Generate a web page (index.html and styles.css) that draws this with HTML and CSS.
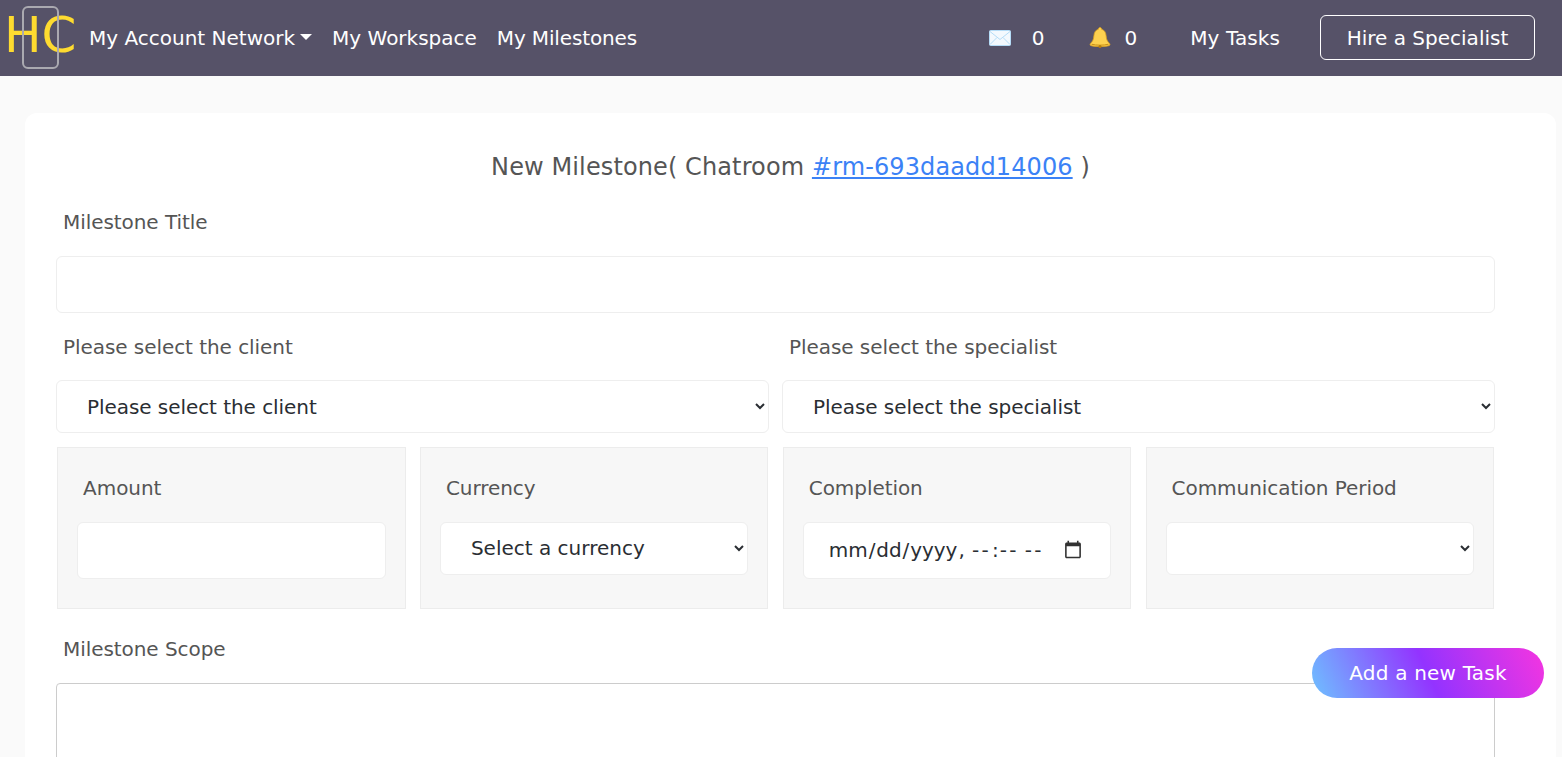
FILE: index.html
```html
<!DOCTYPE html>
<html lang="en">
<head>
<meta charset="utf-8">
<title>New Milestone</title>
<link rel="stylesheet" href="styles.css">
</head>
<body>
<nav class="nav">
  <a class="logo"><span class="logo-text">HC</span><span class="logo-box"></span></a>
  <a class="nav-link dropdown">My Account Network<span class="caret"></span></a>
  <a class="nav-link workspace">My Workspace</a>
  <a class="nav-link milestones">My Milestones</a>
  <div class="nav-right">
    <svg class="icon mail" viewBox="0 0 22 16" width="22" height="16" aria-hidden="true">
      <rect x="0.5" y="0.5" width="21" height="15" rx="1" fill="#f4f9fe" stroke="#b5dcf7"/>
      <path d="M1 1.5 L11 9.5 L21 1.5 M1 14.5 L8 7.5 M21 14.5 L14 7.5" fill="none" stroke="#b5dcf7" stroke-width="1"/>
    </svg>
    <span class="count count-mail">0</span>
    <svg class="icon bell" viewBox="0 0 22 22" width="22" height="22" aria-hidden="true">
      <path d="M11 0.5c1 0 1.6.7 1.6 1.7 3 .8 4.2 3.4 4.5 6.6.3 3.6 1.2 5.6 3.4 7.6.7.7.6 2-.6 2.3-2.5.6-5.7.9-8.9.9s-6.400-.3-8.900-.9c-1.200-.3-1.300-1.600-.6-2.300 2.200-2 3.100-4 3.400-7.600.3-3.200 1.500-5.800 4.500-6.600 0-1 .6-1.700 1.600-1.700z" fill="#fdd14f" stroke="#d99e1e" stroke-width=".8"/>
      <path d="M2.500 17.200c2.500.7 5.500 1 8.500 1s6-.3 8.500-1" fill="none" stroke="#c98f14" stroke-width="1"/>
      <circle cx="11" cy="19.600" r="1.500" fill="#b57c10"/>
    </svg>
    <span class="count count-bell">0</span>
    <a class="nav-link tasks">My Tasks</a>
    <a class="hire">Hire a Specialist</a>
  </div>
</nav>

<main class="card">
  <h1 class="title">New Milestone( Chatroom <a class="room" href="#">#rm-693daadd14006</a> )</h1>
  <label class="label label-title">Milestone Title</label>
  <input class="control control-tall" type="text">

  <div class="pair">
    <div class="pair-col">
      <label class="label label-select">Please select the client</label>
      <select class="control control-select"><option>Please select the client</option></select>
    </div>
    <div class="pair-col">
      <label class="label label-select">Please select the specialist</label>
      <select class="control control-select"><option>Please select the specialist</option></select>
    </div>
  </div>

  <div class="panels">
    <div class="panel">
      <label class="panel-label">Amount</label>
      <input class="control control-tall" type="text">
    </div>
    <div class="panel">
      <label class="panel-label">Currency</label>
      <select class="control control-select"><option>Select a currency</option></select>
    </div>
    <div class="panel">
      <label class="panel-label">Completion</label>
      <input class="control control-tall control-date" type="datetime-local">
    </div>
    <div class="panel">
      <label class="panel-label">Communication Period</label>
      <select class="control control-select"><option></option></select>
    </div>
  </div>

  <label class="label label-scope">Milestone Scope</label>
  <textarea class="scope"></textarea>
</main>

<button class="fab" type="button">Add a new Task</button>
</body>
</html>
```
FILE: styles.css
```css
* { box-sizing: border-box; }
html, body { margin: 0; height: 757px; overflow: hidden; }
body {
  background: #fafafa;
  font-family: "DejaVu Sans", Verdana, sans-serif;
  font-size: 20px;
  color: #555;
}
.nav {
  height: 76px;
  background: #565268;
  display: flex;
  align-items: center;
  padding-left: 4px;
  color: #fff;
}
.logo {
  position: relative;
  display: block;
  width: 71px;
  height: 76px;
  margin-right: 14px;
  line-height: 71px;
  color: #fedb30;
  font-size: 50px;
}
.logo-box {
  position: absolute;
  left: 18px;
  top: 6px;
  width: 37px;
  height: 63px;
  border: 2px solid #aaa9b0;
  border-radius: 6px;
}
.nav-link { color: #fff; white-space: nowrap; }
.dropdown { display: flex; align-items: center; }
.caret {
  margin-left: 5px;
  margin-top: -3px;
  border-top: 6px solid #fff;
  border-left: 6px solid transparent;
  border-right: 6px solid transparent;
}
.workspace { margin-left: 20px; }
.milestones { margin-left: 20px; letter-spacing: -0.15px; }
.nav-right {
  margin-left: auto;
  margin-right: 27px;
  display: flex;
  align-items: center;
}
.icon { flex: none; }
.count-mail { margin-left: 21px; }
.bell { margin-left: 45px; }
.count-bell { margin-left: 13px; }
.tasks { margin-left: 53px; letter-spacing: 0.1px; }
.hire {
  margin-left: 40px;
  margin-top: -1px;
  padding-top: 1px;
  height: 45px;
  width: 215px;
  justify-content: center;
  display: flex;
  align-items: center;
  color: #fff;
  border: 1px solid #fff;
  border-radius: 6px;
}
.card {
  margin: 37px 6px 0 25px;
  height: 700px;
  background: #fff;
  border-radius: 12px 12px 0 0;
  padding: 38px 61px 0 31px;
  letter-spacing: -0.06px;
}
.title {
  margin: 0 -30px 0 0;
  font-size: 24px;
  letter-spacing: 0.11px;
  font-weight: 400;
  line-height: 32px;
  text-align: center;
  color: #555;
}
.room { color: #3b82f6; }
.label {
  display: block;
  padding-left: 7px;
  line-height: 24px;
}
.label-title { margin-top: 27px; margin-bottom: 22px; }
.label-select { margin-top: 0; margin-bottom: 21px; }
.label-scope { margin-top: 28px; margin-bottom: 22px; }
.control {
  display: block;
  width: 100%;
  background: #fff;
  border: 1px solid #eeeeee;
  border-radius: 6px;
  font: inherit;
  letter-spacing: inherit;
  color: #2a2e33;
}
.control-tall { height: 57px; }
.control-select { height: 53px; padding: 0 8px 0 26px; }
.panel .control-select { padding-bottom: 2px; letter-spacing: 0; }
.control-date { padding: 0 25px 2px 24px; }
.control-date::-webkit-datetime-edit-hour-field,
.control-date::-webkit-datetime-edit-minute-field,
.control-date::-webkit-datetime-edit-ampm-field { letter-spacing: 2.3px; }
.control-date::-webkit-calendar-picker-indicator { opacity: 0.8; }
.pair {
  margin-top: 22px;
  display: grid;
  grid-template-columns: minmax(0, 1fr) minmax(0, 1fr);
  column-gap: 13px;
}
.panels {
  margin-top: 14px;
  padding: 0 0.9px 0 1.1px;
  display: grid;
  grid-template-columns: repeat(4, minmax(0, 1fr));
  column-gap: 14.33px;
}
.panel {
  height: 162px;
  background: #f7f7f7;
  border: 1px solid #ececec;
  padding: 28px 19px 0 19px;
}
.panel-label {
  display: block;
  padding-left: 6px;
  line-height: 24px;
  margin-bottom: 22px;
}
.scope {
  display: block;
  width: 100%;
  height: 200px;
  background: #fff;
  border: 1px solid #ccc;
  border-radius: 4px;
  resize: none;
}
.fab {
  position: fixed;
  left: 1312px;
  top: 648px;
  width: 232px;
  height: 50px;
  border: 0;
  border-radius: 25px;
  color: #fff;
  font: inherit;
  letter-spacing: 0.2px;
  background: linear-gradient(65deg, #6ec1ff 0%, #9333ff 50%, #f535e0 100%);
}
```
